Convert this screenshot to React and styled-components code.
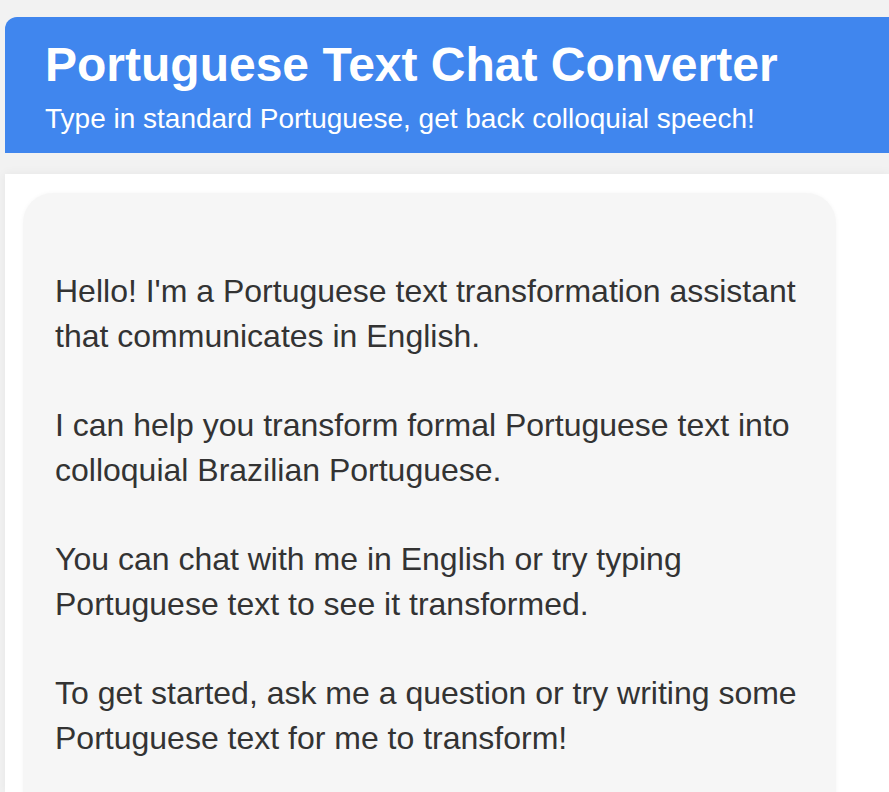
import styled, { createGlobalStyle } from "styled-components";

const GlobalStyle = createGlobalStyle`
  html, body {
    margin: 0;
    padding: 0;
    background: #f2f2f2;
    font-family: "Liberation Sans", Arial, sans-serif;
    overflow: hidden;
  }
`;

const messages = [
  "Hello! I'm a Portuguese text transformation assistant that communicates in English.",
  "I can help you transform formal Portuguese text into colloquial Brazilian Portuguese.",
  "You can chat with me in English or try typing Portuguese text to see it transformed.",
  "To get started, ask me a question or try writing some Portuguese text for me to transform!",
];

const App = () => {
  return (
    <>
      <GlobalStyle />
      <SPage>
        <SHeader>
          <STitle>Portuguese Text Chat Converter</STitle>
          <SSubtitle>Type in standard Portuguese, get back colloquial speech!</SSubtitle>
        </SHeader>
        <SChatPanel>
          <SBubble>
            {messages.map((text) => (
              <SParagraph key={text}>{text}</SParagraph>
            ))}
          </SBubble>
        </SChatPanel>
      </SPage>
    </>
  );
};

const SPage = styled.div`
  padding: 17px 0 0 5px;
  display: flex;
  flex-direction: column;
  gap: 21px;
  height: 775px;
`;

const SHeader = styled.header`
  background-color: #4086ee;
  color: #ffffff;
  border-radius: 12px 0 0 0;
  padding: 21px 40px 0;
  height: 136px;
  box-sizing: border-box;
`;

const STitle = styled.h1`
  margin: 0;
  font-size: 48px;
  font-weight: 700;
  line-height: 54px;
`;

const SSubtitle = styled.p`
  margin: 9px 0 0;
  font-size: 28px;
  line-height: 36px;
`;

const SChatPanel = styled.main`
  flex: 1;
  background-color: #ffffff;
  padding: 19px 0 0 18px;
  box-shadow: rgba(0, 0, 0, 0.06) 0 0 10px;
  overflow: hidden;
`;

const SBubble = styled.div`
  width: 813px;
  box-sizing: border-box;
  min-height: 700px;
  background-color: #f6f6f6;
  border-radius: 30px 30px 0 0;
  padding: 76px 32px 0;
  box-shadow: rgba(0, 0, 0, 0.04) 0 0 4px;
  display: flex;
  flex-direction: column;
  gap: 44px;
`;

const SParagraph = styled.p`
  margin: 0;
  font-size: 32px;
  line-height: 45px;
  color: #333333;
`;

export default App;
